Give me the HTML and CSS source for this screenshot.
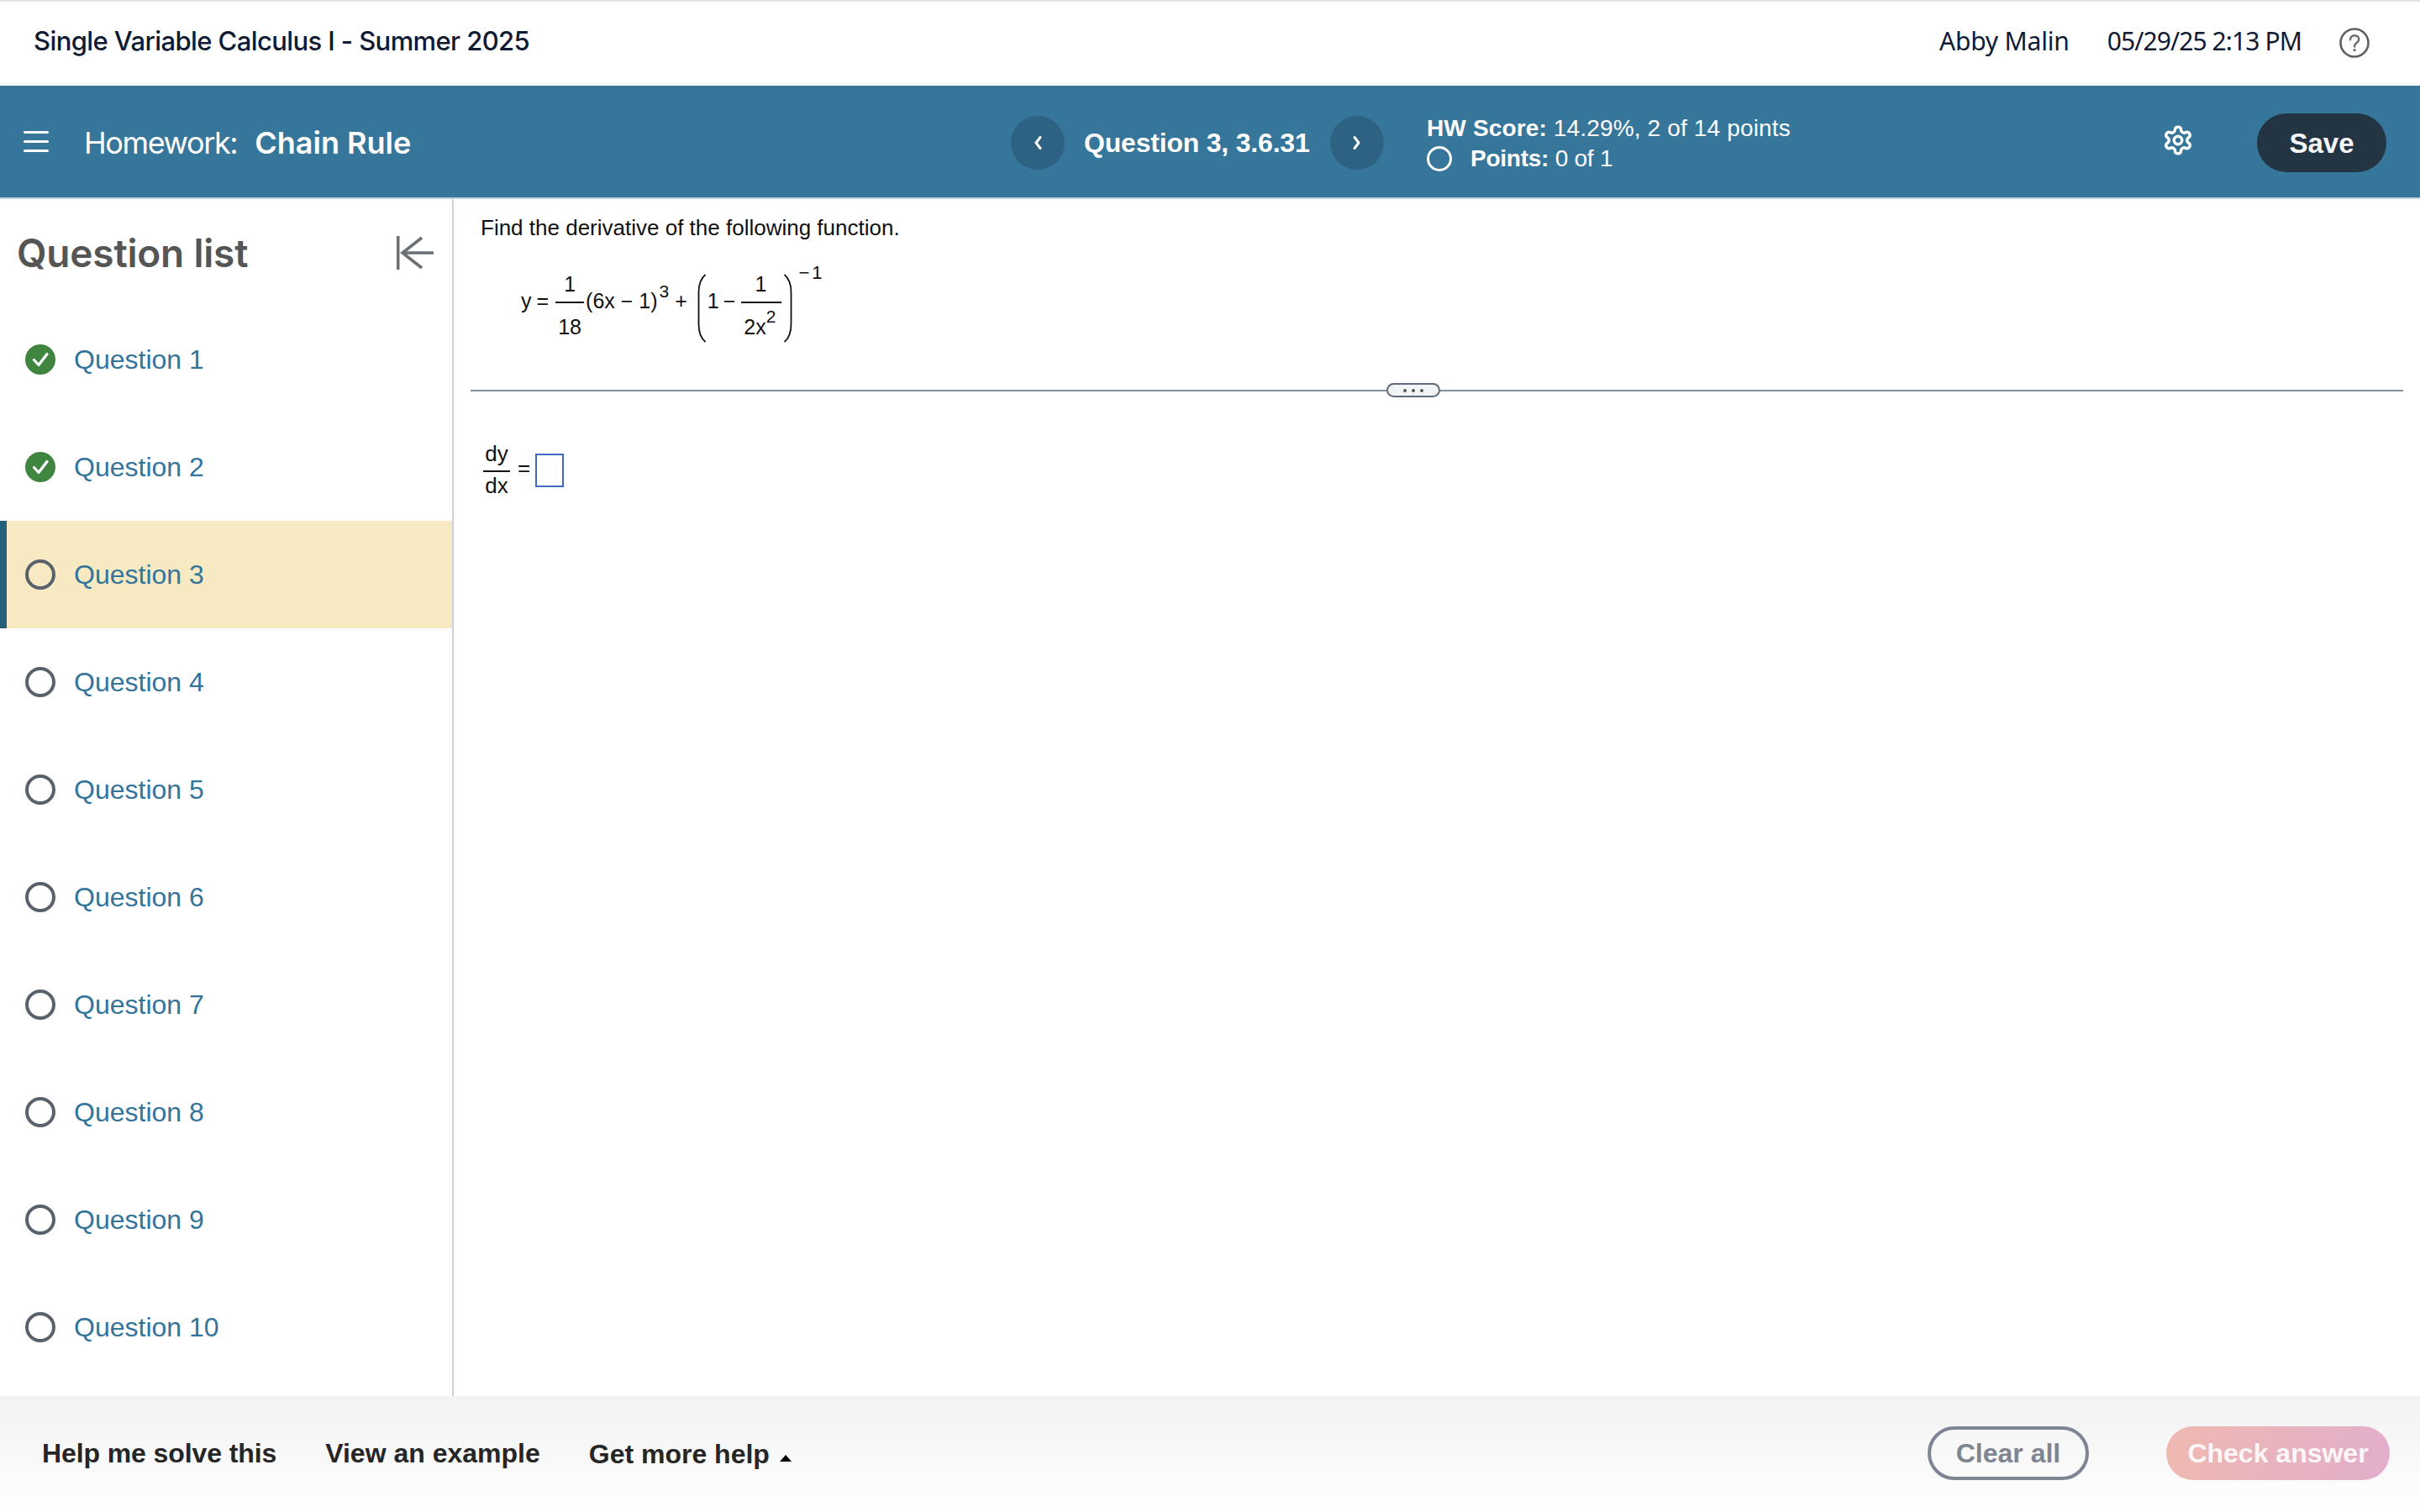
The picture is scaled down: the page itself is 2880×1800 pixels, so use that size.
FILE: index.html
```html
<!DOCTYPE html>
<html lang="en">
<head>
<meta charset="utf-8">
<title>Chain Rule</title>
<link rel="stylesheet" href="styles.css">
</head>
<body>
<div class="app">
  <header class="topbar">
    <div class="course">Single Variable Calculus I - Summer 2025</div>
    <div class="user">Abby Malin</div>
    <div class="date">05/29/25 2:13 PM</div>
    <svg class="help" viewBox="0 0 36 36"><circle cx="18" cy="18" r="16.500" fill="none" stroke="#5f5f5f" stroke-width="2.600"/><path d="M13 14.200c0-3 2.200-5 5.200-5s5 1.900 5 4.500c0 2-1 3.100-2.700 4.200-1.600 1.100-2.300 2-2.300 3.700v.9" fill="none" stroke="#6a6a6a" stroke-width="2.400" stroke-linecap="round"/><circle cx="18.100" cy="26.600" r="1.600" fill="#6a6a6a"/></svg>
  </header>

  <div class="hwbar">
    <div class="hw-left">
      <div class="burger"><i></i><i></i><i></i></div>
      <div class="hw-title"><span class="hw-kind">Homework:</span><b>Chain Rule</b></div>
    </div>
    <div class="nav-btn"><svg viewBox="0 0 12 20" class="chev"><path d="M9 3.500 4 10l5 6.500" fill="none" stroke="#fff" stroke-width="3" stroke-linecap="round" stroke-linejoin="round"/></svg></div>
    <div class="q-label">Question 3, 3.6.31</div>
    <div class="nav-btn"><svg viewBox="0 0 12 20" class="chev"><path d="M3 3.500 8 10l-5 6.500" fill="none" stroke="#fff" stroke-width="3" stroke-linecap="round" stroke-linejoin="round"/></svg></div>
    <div class="score">
      <div class="score-line"><b>HW Score:</b> 14.29%, 2 of 14 points</div>
      <div class="points-line"><span class="ring"></span><span class="points-text"><b>Points:</b> 0 of 1</span></div>
    </div>
    <svg class="gear" viewBox="0 0 24 24" fill="none" stroke="#fff" stroke-width="2.200" stroke-linecap="round" stroke-linejoin="round"><path d="M12.220 2h-.44a2 2 0 0 0-2 2v.18a2 2 0 0 1-1 1.730l-.43.25a2 2 0 0 1-2 0l-.15-.08a2 2 0 0 0-2.730.730l-.22.38a2 2 0 0 0 .73 2.730l.15.100a2 2 0 0 1 1 1.720v.51a2 2 0 0 1-1 1.740l-.15.09a2 2 0 0 0-.73 2.730l.22.38a2 2 0 0 0 2.730.730l.15-.08a2 2 0 0 1 2 0l.43.25a2 2 0 0 1 1 1.730V20a2 2 0 0 0 2 2h.44a2 2 0 0 0 2-2v-.18a2 2 0 0 1 1-1.730l.43-.25a2 2 0 0 1 2 0l.15.08a2 2 0 0 0 2.730-.730l.22-.39a2 2 0 0 0-.73-2.730l-.15-.08a2 2 0 0 1-1-1.740v-.5a2 2 0 0 1 1-1.740l.15-.09a2 2 0 0 0 .73-2.730l-.22-.38a2 2 0 0 0-2.730-.730l-.15.08a2 2 0 0 1-2 0l-.43-.25a2 2 0 0 1-1-1.730V4a2 2 0 0 0-2-2z"/><circle cx="12" cy="12" r="3"/></svg>
    <div class="save">Save</div>
  </div>

  <div class="main">
    <aside class="sidebar">
      <div class="side-head">
        <h2>Question list</h2>
        <svg class="collapse" viewBox="0 0 44 40" fill="none" stroke="#6a7075" stroke-width="3.500"><path d="M1.750 0v40"/><path d="M44 20H8"/><path d="M30 2 7 20l23 18"/></svg>
      </div>
      <ul class="qlist">
        <li class="q"><svg class="status" viewBox="0 0 36 36"><circle cx="18" cy="18" r="18" fill="#3f8540"/><path d="M10.500 18.500l5.500 6 10-13" fill="none" stroke="#fff" stroke-width="3.200" stroke-linecap="round" stroke-linejoin="round"/></svg>Question 1</li>
        <li class="q"><svg class="status" viewBox="0 0 36 36"><circle cx="18" cy="18" r="18" fill="#3f8540"/><path d="M10.500 18.500l5.500 6 10-13" fill="none" stroke="#fff" stroke-width="3.200" stroke-linecap="round" stroke-linejoin="round"/></svg>Question 2</li>
        <li class="q current"><span class="status open"></span>Question 3</li>
        <li class="q"><span class="status open"></span>Question 4</li>
        <li class="q"><span class="status open"></span>Question 5</li>
        <li class="q"><span class="status open"></span>Question 6</li>
        <li class="q"><span class="status open"></span>Question 7</li>
        <li class="q"><span class="status open"></span>Question 8</li>
        <li class="q"><span class="status open"></span>Question 9</li>
        <li class="q"><span class="status open"></span>Question 10</li>
      </ul>
    </aside>

    <section class="content">
      <p class="prompt">Find the derivative of the following function.</p>
      <div class="math">
        <span class="m-y">y</span>
        <span class="m-eq">=</span>
        <span class="frac f18"><span class="num">1</span><span class="bar"></span><span class="den">18</span></span>
        <span class="m-paren">(6x − 1)</span>
        <span class="m-sup3">3</span>
        <span class="m-plus">+</span>
        <svg class="bigp lp" viewBox="0 0 10 82"><path d="M9.500 1C3.500 6 1.500 13 1.500 22v38c0 9 2 16 8 21" fill="none" stroke="#111" stroke-width="1.800"/></svg>
        <span class="m-one">1</span>
        <span class="m-minus">−</span>
        <span class="frac f2x"><span class="num">1</span><span class="bar"></span><span class="den">2x<sup class="sq">2</sup></span></span>
        <svg class="bigp rp" viewBox="0 0 10 82"><path d="M.5 1c6 5 8 12 8 21v38c0 9-2 16-8 21" fill="none" stroke="#111" stroke-width="1.800"/></svg>
        <span class="m-exp">− 1</span>
      </div>
      <div class="divider"><span class="handle"><i></i><i></i><i></i></span></div>
      <div class="answer">
        <span class="frac-dy"><span class="dy">dy</span><span class="bar"></span><span class="dx">dx</span></span>
        <span class="a-eq">=</span>
        <span class="a-box"></span>
      </div>
    </section>
  </div>

  <footer class="footer">
    <span class="f-link f-help">Help me solve this</span>
    <span class="f-link f-view">View an example</span>
    <span class="f-link f-more">Get more help</span>
    <span class="tri"></span>
    <span class="btn-clear">Clear all</span>
    <span class="btn-check">Check answer</span>
  </footer>
</div>
</body>
</html>
```

FILE: styles.css
```css
* { box-sizing: border-box; }
html, body { margin: 0; padding: 0; background: #fff; }
body { font-family: "Liberation Sans", Arial, sans-serif; }
.app { width: 2880px; height: 1800px; display: flex; flex-direction: column; overflow: hidden; }

.topbar { height: 102px; border-top: 2px solid #e2e2e2; display: flex; align-items: center; padding: 0 60px 2px 40px; color: #0f1a33; }
.course { font-family: Inter, sans-serif; font-size: 31px; font-weight: 500; flex: 1; letter-spacing: -0.6px; margin-top: -6px; }
.user { font-family: "Noto Sans", sans-serif; font-size: 30px; margin-top: -6px; letter-spacing: -0.2px; }
.date { font-family: "Noto Sans", sans-serif; font-size: 30px; margin-left: 45px; margin-top: -6px; letter-spacing: -0.9px; }
.help { width: 36px; height: 36px; margin-left: 45px; }

.hwbar { height: 135px; background: #36769a; border-bottom: 2px solid #c3d2df; display: flex; align-items: center; padding: 3px 40px 0 0; color: #fff; }
.hw-left { width: 1203px; display: flex; align-items: center; padding-left: 28px; }
.burger { width: 30px; display: flex; flex-direction: column; gap: 8px; margin-top: -3px; }
.burger i { display: block; height: 3px; background: #fff; border-radius: 2px; }
.hw-title { margin-left: 42px; font-family: Inter, sans-serif; font-size: 36px; }
.hw-kind { letter-spacing: -1.4px; }
.hw-title b { margin-left: 21px; font-weight: 600; }
.nav-btn { width: 64px; height: 64px; border-radius: 50%; background: #2e6282; display: flex; align-items: center; justify-content: center; }
.chev { width: 12px; height: 20px; }
.q-label { width: 316px; padding-left: 23px; font-size: 32px; font-weight: 700; letter-spacing: -0.2px; }
.score { margin-left: 51px; font-size: 28px; letter-spacing: 0.15px; padding-top: 2px; }
.score-line { line-height: 36px; }
.points-line { display: flex; align-items: center; height: 36px; }
.points-text { letter-spacing: -0.25px; }
.ring { width: 30px; height: 30px; border: 3.500px solid #fff; border-radius: 50%; margin-right: 22px; }
.gear { width: 38px; height: 38px; margin-left: auto; margin-right: 75px; margin-top: -6px; }
.save { width: 154px; height: 70px; border-radius: 35px; background: #233443; color: #f5f6fa; font-size: 33px; font-weight: 700; padding-top: 2px; display: flex; align-items: center; justify-content: center; }

.main { flex: 1; display: flex; min-height: 0; }
.sidebar { width: 540px; border-right: 2px solid #ccd1dd; }
.side-head { height: 127px; display: flex; align-items: center; justify-content: space-between; padding: 0 22px 0 20px; }
.side-head h2 { margin: 0; font-family: Inter, sans-serif; font-size: 46px; font-weight: 600; color: #555; letter-spacing: -0.2px; }
.collapse { width: 44px; height: 40px; }
.qlist { list-style: none; margin: 0; padding: 0; }
.q { height: 128px; display: flex; align-items: center; padding-left: 30px; font-size: 32px; color: #33759a; }
.status { width: 36px; height: 36px; margin-right: 22px; flex: none; }
.open { border: 4px solid #59626b; border-radius: 50%; }
.current { background: #f7eac2; border-left: 8px solid #255f7a; padding-left: 22px; }

.content { flex: 1; padding-top: 19px; color: #111; font-size: 26px; min-width: 0; }
.prompt { margin: 0 0 0 32px; line-height: 30px; }
.math { margin-top: 27px; height: 90px; padding-left: 80px; display: flex; align-items: center; line-height: 26px; white-space: nowrap; font-size: 25px; }
.m-eq { margin-left: 6px; }
.frac { display: flex; flex-direction: column; align-items: center; margin-top: 10px; }
.frac .num { height: 26px; margin: 1px 0 8px; }
.frac .den { height: 26px; margin-top: 15px; }
.frac .bar { height: 2px; width: 100%; background: #111; }
.f18 { width: 34px; margin-left: 8px; }
.f2x { width: 48px; margin-left: 7px; }
.f2x .den { margin-right: 4px; }
.f2x .num { margin-right: 2px; }
.m-paren { margin-left: 2px; }
.m-sup3 { font-size: 21px; margin-left: 2px; margin-top: -22px; }
.m-plus { margin-left: 7px; }
.bigp { width: 10px; height: 82px; margin-top: 18px; }
.lp { margin-left: 12px; }
.rp { margin-left: 3px; }
.m-one { margin-left: 2px; }
.m-minus { margin-left: 5px; }
.m-exp { font-size: 22px; margin-left: 7px; margin-top: -66px; word-spacing: -3px; }
.sq { font-size: 21px; line-height: 0; vertical-align: 14px; }
.divider { position: relative; margin: 61px 20px 0 20px; height: 2px; background: #868ea3; }
.handle { position: absolute; left: 1090px; top: -8px; width: 64px; height: 17px; border: 2px solid #5f6b7a; border-radius: 9px; background: #f3f4f6; display: flex; align-items: center; justify-content: center; gap: 6px; }
.handle i { width: 4px; height: 4px; border-radius: 50%; background: #555; }
.answer { margin-top: 60px; padding-left: 35px; display: flex; align-items: flex-start; line-height: 26px; }
.frac-dy { width: 32px; display: flex; flex-direction: column; align-items: center; }
.frac-dy .dy { margin-top: 1px; }
.frac-dy .bar { height: 2px; width: 100%; background: #111; margin: 7px 0 3px; }
.a-eq { margin: 18px 0 0 9px; }
.a-box { width: 34px; height: 40px; border: 2px solid #4169c4; margin: 14px 0 0 6px; }

.footer { height: 138px; background: linear-gradient(#f2f2f2, #ffffff); display: flex; align-items: center; padding: 0 36px 2px 50px; font-size: 32px; font-weight: 700; }
.f-link { color: #262626; }
.f-help { letter-spacing: -0.1px; }
.f-view { margin-left: 58px; }
.f-more { margin-left: 58px; margin-top: 2px; }
.tri { width: 0; height: 0; border-left: 7px solid transparent; border-right: 7px solid transparent; border-bottom: 8px solid #000; margin: 12px 0 0 12px; }
.btn-clear { width: 192px; height: 64px; margin-left: auto; border: 4px solid #7f8494; border-radius: 32px; color: #808592; display: flex; align-items: center; justify-content: center; }
.btn-check { width: 266px; height: 64px; margin-left: 92px; border-radius: 32px; background: linear-gradient(100deg, #efb9b1, #e2aecb); color: #fbf6f8; display: flex; align-items: center; justify-content: center; }
```
